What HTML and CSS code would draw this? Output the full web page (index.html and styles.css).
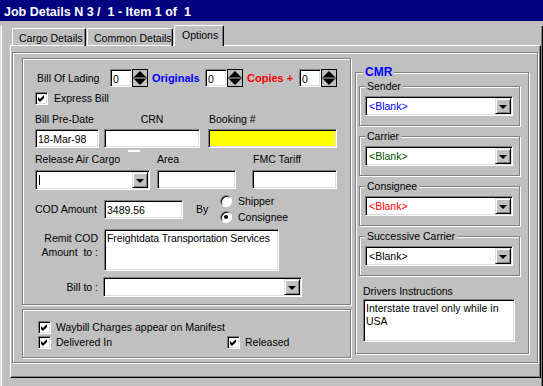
FILE: index.html
```html
<!DOCTYPE html>
<html lang="en">
<head>
    <meta charset="UTF-8">
    <title>Job Details</title>
    <link rel="stylesheet" href="styles.css">
</head>
<body>
    <div class="titlebar">Job Details N 3 /  1 - Item 1 of  1</div>

    <div class="window">
        <div class="tabs">
            <div class="tab tab-cargo">Cargo Details</div>
            <div class="tab tab-common">Common Details</div>
            <div class="tab tab-options active">Options</div>
        </div>

        <div class="panel">
            <div class="frame">
                <div class="left-col">
                    <div class="box main-box">
                        <div class="row lading-row">
                            <span class="lading-label">Bill Of Lading</span>
                            <div class="spin">
                                <div class="field spin-field">0</div>
                                <svg class="spin-btn" width="16" height="18" viewBox="0 0 16 18">
                                    <rect x="0.5" y="0.5" width="15" height="17" fill="#c0c0c0" stroke="#000"/>
                                    <path d="M2 8 L8 2 L14 8 Z" fill="#000"/>
                                    <line x1="1" y1="9" x2="15" y2="9" stroke="#000"/>
                                    <path d="M2 10 L8 16 L14 10 Z" fill="#000"/>
                                </svg>
                            </div>
                            <span class="originals">Originals</span>
                            <div class="spin">
                                <div class="field spin-field">0</div>
                                <svg class="spin-btn" width="16" height="18" viewBox="0 0 16 18">
                                    <rect x="0.5" y="0.5" width="15" height="17" fill="#c0c0c0" stroke="#000"/>
                                    <path d="M2 8 L8 2 L14 8 Z" fill="#000"/>
                                    <line x1="1" y1="9" x2="15" y2="9" stroke="#000"/>
                                    <path d="M2 10 L8 16 L14 10 Z" fill="#000"/>
                                </svg>
                            </div>
                            <span class="copies">Copies +</span>
                            <div class="spin">
                                <div class="field spin-field">0</div>
                                <svg class="spin-btn" width="16" height="18" viewBox="0 0 16 18">
                                    <rect x="0.5" y="0.5" width="15" height="17" fill="#c0c0c0" stroke="#000"/>
                                    <path d="M2 8 L8 2 L14 8 Z" fill="#000"/>
                                    <line x1="1" y1="9" x2="15" y2="9" stroke="#000"/>
                                    <path d="M2 10 L8 16 L14 10 Z" fill="#000"/>
                                </svg>
                            </div>
                        </div>

                        <div class="check-row express-row">
                            <div class="check"><svg width="9" height="9" viewBox="0 0 9 9"><path d="M1 3 L3 5 L7 1 L7 4 L3 8 L1 6 Z" fill="#000"/></svg></div>
                            <span>Express Bill</span>
                        </div>

                        <div class="row field-row date-row">
                            <div class="col col-date">
                                <span class="col-label">Bill Pre-Date</span>
                                <div class="field text-field">18-Mar-98</div>
                            </div>
                            <div class="col col-crn">
                                <span class="col-label center">CRN</span>
                                <div class="field text-field"></div>
                                <div class="crn-mark"></div>
                            </div>
                            <div class="col col-booking">
                                <span class="col-label">Booking #</span>
                                <div class="field text-field booking"></div>
                            </div>
                        </div>

                        <div class="row field-row release-row">
                            <div class="col col-release">
                                <span class="col-label">Release Air Cargo</span>
                                <div class="field select">
                                    <span class="select-text"><span class="caret"></span></span>
                                    <span class="drop-btn"></span>
                                </div>
                            </div>
                            <div class="col col-area">
                                <span class="col-label">Area</span>
                                <div class="field text-field"></div>
                            </div>
                            <div class="col col-fmc">
                                <span class="col-label">FMC Tariff</span>
                                <div class="field text-field"></div>
                            </div>
                        </div>

                        <div class="row cod-row">
                            <span class="side-label">COD Amount</span>
                            <div class="field text-field cod-field">3489.56</div>
                            <span class="by-label">By</span>
                            <div class="radios">
                                <div class="radio-item"><span class="radio"></span><span>Shipper</span></div>
                                <div class="radio-item"><span class="radio on"></span><span>Consignee</span></div>
                            </div>
                        </div>

                        <div class="row remit-row">
                            <span class="side-label right">Remit COD<br>Amount  to :</span>
                            <div class="field memo remit-memo">Freightdata Transportation Services</div>
                        </div>

                        <div class="row billto-row">
                            <span class="side-label right">Bill to :</span>
                            <div class="field select billto-select">
                                <span class="select-text"></span>
                                <span class="drop-btn"></span>
                            </div>
                        </div>
                    </div>

                    <div class="box flags-box">
                        <div class="check-row">
                            <div class="check"><svg width="9" height="9" viewBox="0 0 9 9"><path d="M1 3 L3 5 L7 1 L7 4 L3 8 L1 6 Z" fill="#000"/></svg></div>
                            <span>Waybill Charges appear on Manifest</span>
                        </div>
                        <div class="flag-line">
                            <div class="check-row delivered">
                                <div class="check"><svg width="9" height="9" viewBox="0 0 9 9"><path d="M1 3 L3 5 L7 1 L7 4 L3 8 L1 6 Z" fill="#000"/></svg></div>
                                <span>Delivered In</span>
                            </div>
                            <div class="check-row">
                                <div class="check"><svg width="9" height="9" viewBox="0 0 9 9"><path d="M1 3 L3 5 L7 1 L7 4 L3 8 L1 6 Z" fill="#000"/></svg></div>
                                <span>Released</span>
                            </div>
                        </div>
                    </div>
                </div>

                <div class="box cmr-box">
                    <div class="group-title cmr-title">CMR</div>

                    <div class="box sub-group">
                        <div class="group-title">Sender</div>
                        <div class="field select cmr-select">
                            <span class="select-text blue">&lt;Blank&gt;</span>
                            <span class="drop-btn"></span>
                        </div>
                    </div>
                    <div class="box sub-group">
                        <div class="group-title">Carrier</div>
                        <div class="field select cmr-select">
                            <span class="select-text green">&lt;Blank&gt;</span>
                            <span class="drop-btn"></span>
                        </div>
                    </div>
                    <div class="box sub-group">
                        <div class="group-title">Consignee</div>
                        <div class="field select cmr-select">
                            <span class="select-text red">&lt;Blank&gt;</span>
                            <span class="drop-btn"></span>
                        </div>
                    </div>
                    <div class="box sub-group">
                        <div class="group-title">Successive Carrier</div>
                        <div class="field select cmr-select">
                            <span class="select-text">&lt;Blank&gt;</span>
                            <span class="drop-btn"></span>
                        </div>
                    </div>

                    <div class="drivers-label">Drivers Instructions</div>
                    <div class="field memo drivers-memo">Interstate travel only while in<br>USA</div>
                </div>
            </div>
        </div>
    </div>
</body>
</html>
```

FILE: styles.css
```css
body {
    margin: 0;
    background-color: #c0c0c0;
    font-family: "Liberation Sans", Arial, sans-serif;
    font-size: 10.5px;
    line-height: 13px;
    color: #000;
}

.titlebar {
    height: 21px;
    box-sizing: border-box;
    padding: 3px 0 0 4px;
    background-color: #000080;
    color: #fff;
    font-weight: bold;
    font-size: 12.5px;
    line-height: 18px;
    white-space: pre;
}

.window {
    width: 543px;
    height: 365px;
    box-sizing: border-box;
    border-left: 1px solid #dfdfdf;
    border-right: 1px solid #000;
    box-shadow: inset 1px 0 #fff, inset -1px 0 #808080;
    padding: 0 1px;
}

/* tabs */
.tabs {
    display: flex;
    align-items: flex-end;
    height: 20px;
    margin-top: 5px;
    padding-left: 10px;
    margin-bottom: -1px;
}

.tab {
    height: 18px;
    box-sizing: border-box;
    border-top: 1px solid #fff;
    border-left: 1px solid #fff;
    border-right: 1px solid #000;
    border-radius: 2px 2px 0 0;
    box-shadow: inset -1px 0 #808080;
    padding: 1px 0 0 6px;
    line-height: 16px;
    margin-right: 1px;
    white-space: nowrap;
    overflow: hidden;
}

.tab-cargo { width: 74px; }
.tab-common { width: 86px; }

.tab-options {
    width: 50px;
    padding-left: 7px;
}

.tab.active {
    height: 21px;
    position: relative;
    z-index: 1;
    background-color: #c0c0c0;
}

/* panel + frame */
.panel {
    width: 531px;
    height: 333px;
    margin-left: 8px;
    box-sizing: border-box;
    border-top: 1px solid #fff;
    border-left: 1px solid #fff;
    border-right: 1px solid #000;
    border-bottom: 1px solid #000;
    box-shadow: inset -1px -1px #808080;
    padding: 6px 0 0 1px;
}

.box {
    border: 1px solid #808080;
    box-shadow: inset 1px 1px #fff, 1px 1px #fff;
    box-sizing: border-box;
}

.frame {
    width: 526px;
    height: 311px;
    box-sizing: border-box;
    border: 1px solid #808080;
    box-shadow: inset 1px 1px #fff, 1px 1px #fff;
    padding: 5px 0 0 9px;
    display: flex;
    align-items: flex-start;
}

.left-col {
    display: flex;
    flex-direction: column;
    gap: 4px;
}

/* fields */
.field {
    background-color: #fff;
    border: 1px solid;
    border-color: #808080 #fff #fff #808080;
    box-shadow: inset 1px 1px #000, inset -1px -1px #dfdfdf;
    box-sizing: border-box;
}

.text-field {
    height: 19px;
    padding: 2px 0 0 2px;
    line-height: 14px;
    white-space: nowrap;
    overflow: hidden;
}

.booking {
    background-color: #ffff00;
}

.memo {
    padding: 2px 2px 0 2px;
    line-height: 13px;
}

.select {
    display: flex;
    height: 20px;
    padding: 1px;
}

.select-text {
    flex: 1;
    display: flex;
    align-items: center;
    padding-left: 2px;
    white-space: nowrap;
}

.caret {
    width: 1px;
    height: 10px;
    background-color: #000;
}

.drop-btn {
    width: 16px;
    height: 16px;
    box-sizing: border-box;
    background-color: #c0c0c0;
    border: 1px solid;
    border-color: #dfdfdf #000 #000 #dfdfdf;
    box-shadow: inset 1px 1px #fff, inset -1px -1px #808080;
    display: flex;
    align-items: center;
    justify-content: center;
}

.drop-btn::after {
    content: '';
    border-left: 4px solid transparent;
    border-right: 4px solid transparent;
    border-top: 4px solid #000;
    margin-top: 1px;
}

.check {
    width: 13px;
    height: 13px;
    box-sizing: border-box;
    padding: 1px;
    background-color: #fff;
    border: 1px solid;
    border-color: #808080 #fff #fff #808080;
    box-shadow: inset 1px 1px #000, inset -1px -1px #dfdfdf;
}

.check svg {
    display: block;
}

.check-row {
    display: flex;
    align-items: center;
    gap: 5px;
    height: 13px;
    white-space: nowrap;
}

.radio {
    width: 12px;
    height: 12px;
    box-sizing: border-box;
    border-radius: 50%;
    background-color: #fff;
    border: 1px solid;
    border-color: #808080 #fff #fff #808080;
    box-shadow: inset 1px 1px #000;
    display: flex;
    align-items: center;
    justify-content: center;
}

.radio.on::after {
    content: '';
    width: 4px;
    height: 4px;
    border-radius: 50%;
    background-color: #000;
}

/* main box */
.main-box {
    width: 329px;
    height: 247px;
    padding: 10px 0 0 12px;
}

.row {
    display: flex;
}

.lading-row {
    align-items: center;
    height: 18px;
}

.lading-label {
    width: 75px;
    padding-left: 2px;
    box-sizing: border-box;
}

.spin {
    display: flex;
}

.spin-field {
    width: 22px;
    height: 18px;
    padding: 2px 0 0 2px;
    line-height: 14px;
}

.spin-btn {
    display: block;
}

.originals {
    margin-left: 4px;
    width: 53px;
    color: #0000ff;
    font-weight: bold;
    font-size: 11px;
}

.copies {
    margin-left: 4px;
    width: 52px;
    color: #ff0000;
    font-weight: bold;
    font-size: 11px;
}

.express-row {
    margin-top: 5px;
    gap: 6px;
}

.field-row {
    align-items: flex-start;
}

.col {
    display: flex;
    flex-direction: column;
}

.col-label {
    height: 13px;
    margin-bottom: 3px;
    white-space: nowrap;
}

.col-label.center {
    text-align: center;
}

.date-row {
    margin-top: 8px;
}

.col-date { width: 64px; }
.col-crn { width: 96px; margin-left: 5px; }
.col-booking { width: 129px; margin-left: 8px; }
.col-booking .col-label { padding-left: 1px; }

.crn-mark {
    width: 12px;
    height: 2px;
    margin: 2px 0 0 24px;
    background-color: #fff;
}

.release-row {
    margin-top: 1px;
}

.release-row .col-label {
    margin-bottom: 4px;
}

.col-release { width: 115px; }
.col-area { width: 79px; margin-left: 7px; }
.col-fmc { width: 85px; margin-left: 16px; }
.col-fmc .col-label { padding-left: 1px; }

.cod-row {
    margin-top: 4px;
    height: 30px;
    align-items: center;
}

.side-label {
    width: 63px;
    flex-shrink: 0;
    white-space: pre;
}

.side-label.right {
    text-align: right;
}

.cod-field {
    width: 79px;
    margin-left: 6px;
}

.by-label {
    margin-left: 13px;
    width: 24px;
}

.radios {
    display: flex;
    flex-direction: column;
    gap: 3px;
}

.radio-item {
    display: flex;
    align-items: center;
    gap: 6px;
    height: 13px;
}

.remit-row {
    margin-top: 5px;
}

.remit-row .side-label {
    padding-top: 2px;
    line-height: 14px;
}

.remit-memo {
    width: 175px;
    height: 42px;
    margin-left: 6px;
    white-space: nowrap;
    overflow: hidden;
    letter-spacing: -0.1px;
}

.billto-row {
    margin-top: 6px;
    align-items: center;
}

.billto-select {
    width: 199px;
    margin-left: 5px;
}

/* flags box */
.flags-box {
    width: 329px;
    height: 49px;
    padding: 11px 0 0 15px;
    display: flex;
    flex-direction: column;
    gap: 2px;
}

.flag-line {
    display: flex;
}

.delivered {
    width: 189px;
}

/* CMR */
.cmr-box {
    width: 174px;
    height: 282px;
    margin: 14px 0 0 4px;
    padding-left: 3px;
}

.group-title {
    width: fit-content;
    height: 13px;
    margin: -7px 0 0 5px;
    padding: 0 2px;
    background-color: #c0c0c0;
    white-space: nowrap;
}

.cmr-title {
    margin-left: 4px;
    color: #0000ff;
    font-weight: bold;
    font-size: 12px;
}

.sub-group {
    width: 161px;
    height: 40px;
    margin-top: 10px;
}

.cmr-title + .sub-group {
    margin-top: 7px;
}

.cmr-select {
    width: 148px;
    margin: 3px 0 0 5px;
}

.blue { color: #0000ff; }
.green { color: #005000; }
.red { color: #ff0000; }

.drivers-label {
    margin: 9px 0 0 4px;
}

.drivers-memo {
    width: 152px;
    height: 43px;
    margin: 1px 0 0 4px;
}
```
